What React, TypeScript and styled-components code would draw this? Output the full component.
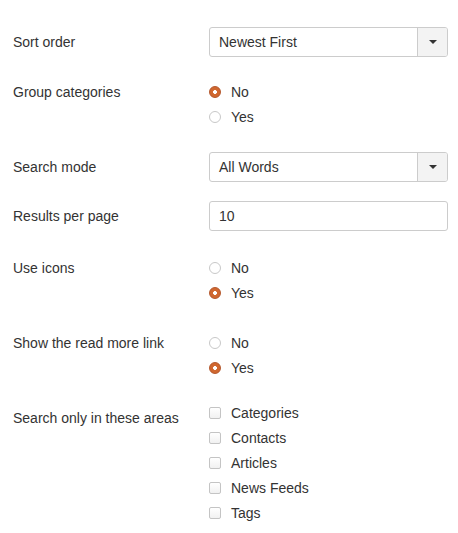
import { createGlobalStyle } from 'styled-components';
import styled from 'styled-components';

const GlobalStyle = createGlobalStyle`
  body {
    margin: 0;
    background: #fff;
    font-family: "Liberation Sans", Arial, sans-serif;
    font-size: 14px;
    color: #333;
  }
`;

type Option = { label: string; checked?: boolean };

const Select = ({ value }: { value: string }) => (
  <SelectBox>
    <SelectValue>{value}</SelectValue>
    <SelectButton>
      <Caret />
    </SelectButton>
  </SelectBox>
);

const Radios = ({ options }: { options: Option[] }) => (
  <List>
    {options.map((o) => (
      <Item key={o.label}>
        <Radio checked={!!o.checked} />
        {o.label}
      </Item>
    ))}
  </List>
);

const Checks = ({ options }: { options: Option[] }) => (
  <List>
    {options.map((o) => (
      <Item key={o.label}>
        <Check />
        {o.label}
      </Item>
    ))}
  </List>
);

const App = () => {
  return (
    <>
      <GlobalStyle />
      <Form>
        <Row gap={22}>
          <Label top={7}>Sort order</Label>
          <Select value="Newest First" />
        </Row>
        <Row gap={23}>
          <Label top={5}>Group categories</Label>
          <Radios options={[{ label: 'No', checked: true }, { label: 'Yes' }]} />
        </Row>
        <Row gap={19}>
          <Label top={7}>Search mode</Label>
          <Select value="All Words" />
        </Row>
        <Row gap={24}>
          <Label top={7}>Results per page</Label>
          <TextInput>10</TextInput>
        </Row>
        <Row gap={25}>
          <Label top={5}>Use icons</Label>
          <Radios options={[{ label: 'No' }, { label: 'Yes', checked: true }]} />
        </Row>
        <Row gap={20}>
          <Label top={5}>Show the read more link</Label>
          <Radios options={[{ label: 'No' }, { label: 'Yes', checked: true }]} />
        </Row>
        <Row gap={0}>
          <Label top={10}>Search only in these areas</Label>
          <Checks
            options={[
              { label: 'Categories' },
              { label: 'Contacts' },
              { label: 'Articles' },
              { label: 'News Feeds' },
              { label: 'Tags' },
            ]}
          />
        </Row>
      </Form>
    </>
  );
};

const Form = styled.div`
  padding: 27px 10px 0 13px;
  width: 435px;
`;

const Row = styled.div<{ gap: number }>`
  display: grid;
  grid-template-columns: 196px 239px;
  align-items: start;
  margin-bottom: ${(p) => p.gap}px;
`;

const Label = styled.div<{ top: number }>`
  padding-top: ${(p) => p.top}px;
  line-height: 16px;
`;

const SelectBox = styled.div`
  display: flex;
  height: 30px;
  box-sizing: border-box;
  border: 1px solid #ccc;
  border-radius: 3px;
  background: #fff;
  overflow: hidden;
`;

const SelectValue = styled.div`
  flex: 1;
  padding: 0 9px;
  line-height: 28px;
  color: #333;
`;

const SelectButton = styled.div`
  width: 29px;
  border-left: 1px solid #ccc;
  background: #f3f3f3;
  display: flex;
  align-items: center;
  justify-content: center;
`;

const Caret = styled.span`
  width: 0;
  height: 0;
  border-left: 4px solid transparent;
  border-right: 4px solid transparent;
  border-top: 4px solid #333;
`;

const TextInput = styled.div`
  height: 30px;
  box-sizing: border-box;
  border: 1px solid #ccc;
  border-radius: 3px;
  padding: 0 9px;
  line-height: 28px;
`;

const List = styled.div`
  display: flex;
  flex-direction: column;
`;

const Item = styled.div`
  display: flex;
  align-items: center;
  height: 25px;
  gap: 10px;
`;

const Radio = styled.span<{ checked: boolean }>`
  width: 12px;
  height: 12px;
  box-sizing: border-box;
  border-radius: 50%;
  border: 1px solid ${(p) => (p.checked ? '#b4562a' : '#c8c8c8')};
  background: ${(p) =>
    p.checked
      ? 'radial-gradient(circle, #fff 0 1.6px, #d0672f 2.2px)'
      : '#fff'};
  flex-shrink: 0;
`;

const Check = styled.span`
  width: 12px;
  height: 12px;
  box-sizing: border-box;
  border: 1px solid #c4c4c4;
  border-radius: 2px;
  background: linear-gradient(#fff, #f1f1f1);
  flex-shrink: 0;
`;

export default App;
